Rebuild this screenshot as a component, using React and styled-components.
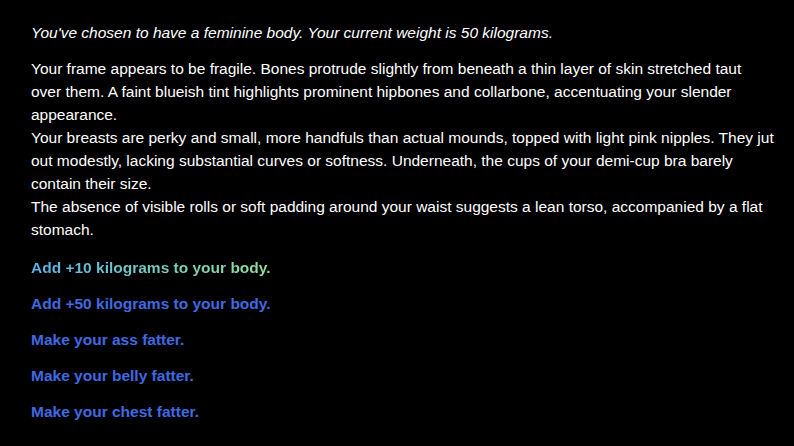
import React from 'react';
import styled, {createGlobalStyle} from "styled-components";

const GlobalStyle = createGlobalStyle`
    body {
        margin : 0;
        background : #000;
        font-family : "Liberation Sans", Arial, sans-serif;
    }
`

const choices = [
    {text : "Add +10 kilograms to your body.", active : true},
    {text : "Add +50 kilograms to your body."},
    {text : "Make your ass fatter."},
    {text : "Make your belly fatter."},
    {text : "Make your chest fatter."},
]

function App() {
    return (
        <Page>
            <GlobalStyle/>
            <Intro>You've chosen to have a feminine body. Your current weight is 50 kilograms.</Intro>
            <Desc>
                <p>Your frame appears to be fragile. Bones protrude slightly from beneath a thin layer of skin stretched taut over them. A faint blueish tint highlights prominent hipbones and collarbone, accentuating your slender appearance.</p>
                <p>Your breasts are perky and small, more handfuls than actual mounds, topped with light pink nipples. They jut out modestly, lacking substantial curves or softness. Underneath, the cups of your demi-cup bra barely contain their size.</p>
                <p>The absence of visible rolls or soft padding around your waist suggests a lean torso, accompanied by a flat stomach.</p>
            </Desc>
            <Choices>
                {choices.map(c => (
                    <Choice key={c.text} active={c.active ? 1 : 0}>{c.text}</Choice>
                ))}
            </Choices>
        </Page>
    )
}

export default App

const Page = styled.div`
    padding : 21px 19px 20px 31px;
    color : #fff;
    font-size : 15.5px;
    line-height : 23px;
`
const Intro = styled.div`
    font-style : italic;
    margin-bottom : 13px;
`
const Desc = styled.div`
    & p {
        margin : 0;
    }
`
const Choices = styled.div`
    display : flex;
    flex-direction : column;
    align-items : flex-start;
    gap : 13px;
    margin-top : 15px;
`
const Choice = styled.a`
    font-weight : 700;
    cursor : pointer;
    color : #4169e1;
    ${props => props.active && `
        background : linear-gradient(90deg, #5ab4ea, #92e19a);
        -webkit-background-clip : text;
        background-clip : text;
        color : transparent;
    `}
`
